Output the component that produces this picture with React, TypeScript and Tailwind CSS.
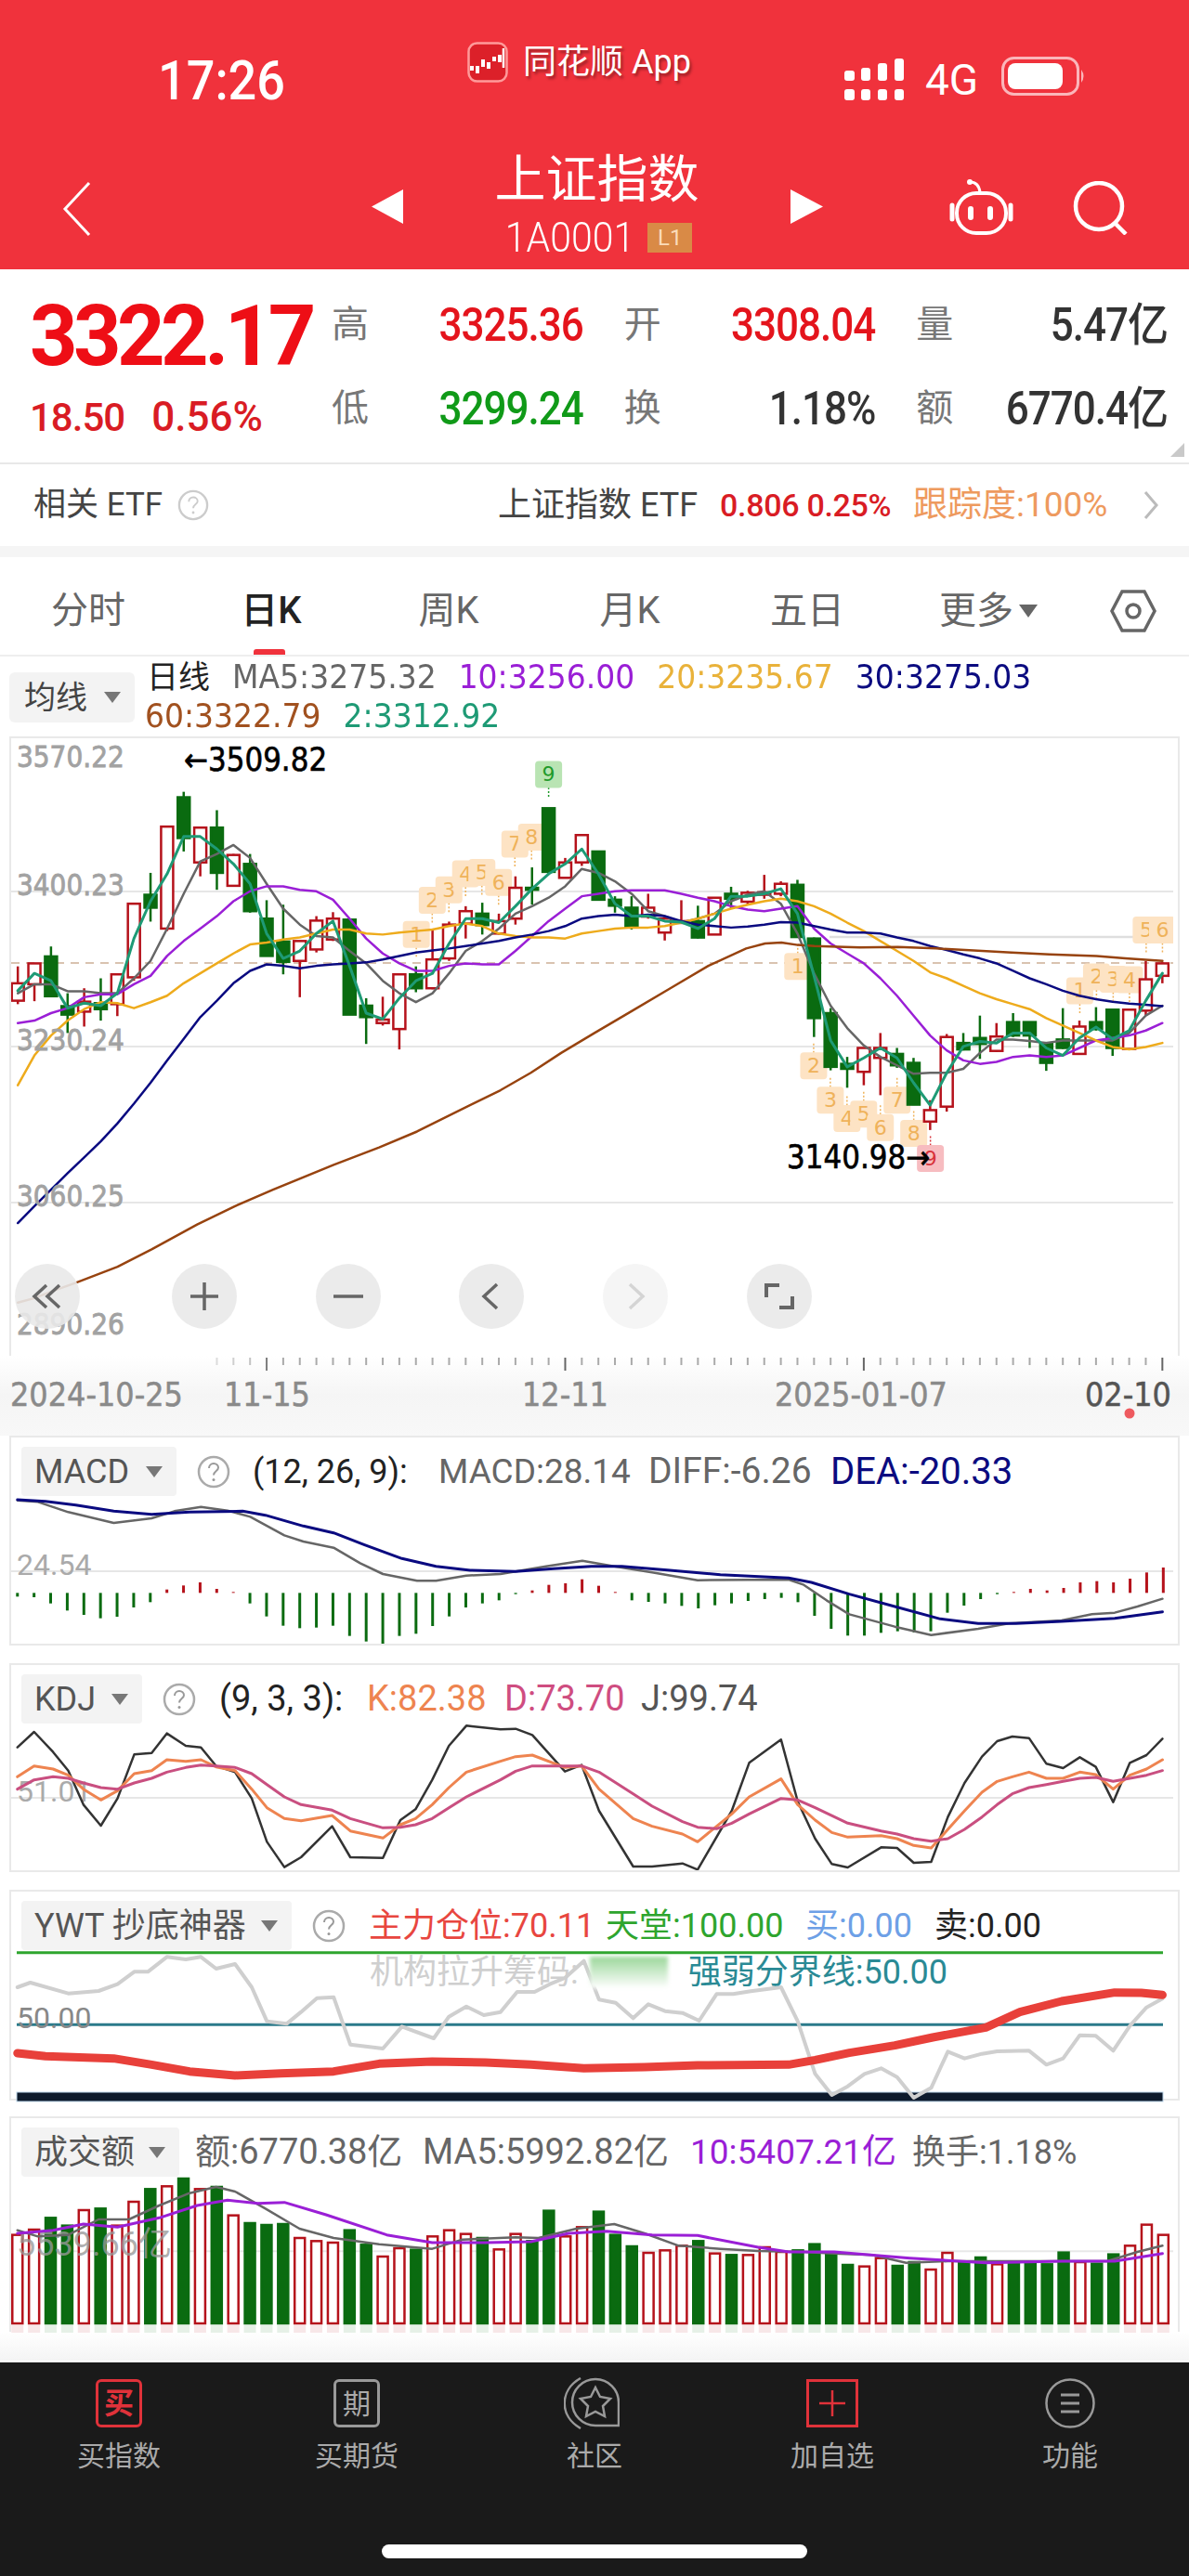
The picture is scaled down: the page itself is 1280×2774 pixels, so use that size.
import type { ReactNode } from 'react';

const CN = "[font-family:Roboto,'Noto_Sans_CJK_SC',sans-serif]";
const DJ = "[font-family:'DejaVu_Sans','Noto_Sans_CJK_SC',sans-serif]";

const RED = '#b5121b';
const GREEN = '#0a6b10';

// [up, high, top, bottom, low] read off the reference, in crop units (x 2.45, y 1.867)
const CANDLES: [number, number, number, number, number][] = [
  [1, 636, 670, 705, 712], [1, 630, 630, 672, 706], [0, 596, 616, 696, 696], [0, 690, 716, 733, 770],
  [1, 680, 707, 727, 757], [0, 660, 710, 722, 745], [1, 650, 652, 712, 736], [1, 510, 510, 658, 665],
  [0, 448, 492, 518, 546], [1, 355, 355, 560, 565], [0, 285, 296, 378, 405], [1, 357, 357, 427, 455],
  [0, 322, 357, 448, 482], [1, 410, 412, 474, 476], [0, 410, 430, 525, 528], [0, 503, 540, 615, 615],
  [0, 512, 586, 627, 652], [1, 585, 585, 625, 698], [1, 535, 544, 602, 608], [1, 527, 540, 582, 585],
  [0, 542, 542, 733, 733], [0, 700, 715, 738, 792], [1, 697, 743, 750, 755], [1, 652, 652, 762, 803],
  [0, 636, 652, 680, 688], [1, 560, 622, 680, 682], [1, 546, 552, 620, 625], [1, 515, 525, 550, 580],
  [0, 508, 530, 553, 572], [1, 530, 545, 570, 572], [1, 455, 478, 540, 552], [0, 437, 478, 482, 512],
  [0, 318, 318, 446, 452], [1, 418, 427, 458, 458], [1, 372, 372, 427, 434], [0, 405, 405, 502, 502],
  [0, 495, 502, 514, 528], [0, 495, 518, 556, 562], [1, 490, 518, 536, 540], [1, 535, 540, 568, 584],
  [1, 503, 545, 548, 550], [0, 514, 545, 578, 580], [1, 498, 498, 572, 572], [0, 476, 490, 500, 520],
  [1, 484, 488, 506, 512], [1, 452, 487, 492, 500], [1, 465, 470, 490, 495], [0, 462, 472, 577, 578],
  [0, 578, 580, 740, 778], [0, 720, 730, 838, 845], [0, 818, 832, 842, 880], [1, 800, 800, 848, 875],
  [1, 770, 800, 820, 895], [0, 800, 812, 835, 840], [0, 820, 830, 914, 915], [1, 905, 925, 948, 965],
  [1, 772, 778, 918, 928], [0, 770, 790, 803, 805], [0, 735, 780, 792, 822], [1, 750, 777, 806, 808],
  [0, 730, 748, 775, 778], [0, 748, 748, 775, 800], [0, 788, 790, 830, 846], [0, 720, 783, 800, 802],
  [1, 745, 757, 812, 813], [0, 718, 748, 762, 765], [0, 723, 723, 800, 816], [1, 722, 723, 802, 803],
  [1, 625, 662, 725, 735], [1, 628, 630, 655, 670],
];

const MA5 = [690, 672, 672, 686, 686, 690, 690, 660, 625, 560, 490, 425, 410, 392, 418, 470, 520, 552, 575, 578, 605, 630, 665, 690, 708, 690, 650, 605, 585, 560, 530, 515, 498, 475, 440, 448, 465, 490, 525, 535, 548, 540, 530, 505, 492, 485, 510, 570, 650, 715, 760, 795, 818, 835, 852, 850, 850, 842, 810, 783, 783, 786, 790, 785, 785, 785, 785, 770, 735, 715];
const MA10 = [750, 745, 730, 720, 698, 692, 692, 672, 655, 615, 585, 560, 535, 505, 485, 475, 475, 482, 485, 502, 540, 580, 610, 630, 645, 645, 635, 630, 632, 632, 605, 575, 545, 520, 495, 490, 485, 483, 483, 483, 490, 498, 505, 515, 522, 525, 520, 515, 560, 590, 610, 630, 660, 695, 735, 775, 805, 825, 832, 828, 818, 815, 818, 815, 800, 785, 780, 775, 765, 750];
const MA20 = [875, 815, 775, 745, 722, 708, 710, 720, 708, 695, 670, 650, 630, 610, 592, 588, 582, 578, 570, 562, 562, 570, 572, 568, 565, 562, 555, 550, 555, 570, 575, 578, 578, 580, 570, 565, 560, 558, 558, 555, 548, 540, 530, 520, 512, 505, 500, 505, 515, 530, 548, 565, 585, 605, 625, 648, 660, 675, 690, 702, 712, 722, 740, 755, 770, 785, 798, 803, 798, 790];
const MA30 = [1152, 1118, 1085, 1052, 1020, 988, 952, 912, 870, 825, 782, 738, 705, 670, 645, 632, 635, 640, 635, 632, 630, 628, 622, 615, 608, 604, 600, 595, 590, 585, 578, 572, 565, 555, 540, 535, 532, 535, 532, 535, 545, 552, 555, 558, 556, 552, 547, 548, 555, 562, 568, 568, 570, 578, 585, 595, 603, 612, 620, 630, 645, 660, 672, 685, 695, 702, 707, 711, 713, 716];
const MA2 = [685, 650, 665, 720, 710, 715, 690, 580, 505, 450, 375, 375, 400, 430, 470, 570, 620, 605, 570, 545, 635, 730, 742, 700, 665, 650, 590, 540, 540, 548, 515, 480, 450, 430, 400, 450, 510, 535, 535, 545, 547, 560, 540, 495, 495, 490, 480, 530, 655, 785, 838, 820, 800, 820, 870, 915, 850, 797, 787, 790, 770, 770, 800, 815, 780, 758, 782, 765, 705, 650];
const MA60 = [47, 1312, 91, 1303, 135, 1290, 200, 1272, 310, 1240, 400, 1205, 520, 1155, 620, 1118, 720, 1085, 880, 1035, 1000, 1000, 1100, 968, 1200, 930, 1320, 885, 1400, 850, 1480, 810, 1568, 770, 1668, 725, 1768, 680, 1868, 635, 1968, 600, 2018, 590, 2061, 588, 2104, 593, 2148, 595, 2268, 598, 2368, 597, 2468, 600, 2568, 604, 2668, 608, 2768, 612, 2892, 615, 2968, 620, 3066, 625];

// sequence badges, crop units; kind 0 orange, 1 green, 2 red; last flag: badge hangs under its candle
const BADGES: [number, number, string, number, boolean][] = [
  [1098, 572, '1', 0, false], [1140, 503, '2', 0, false], [1184, 482, '3', 0, false], [1228, 450, '4', 0, false], [1271, 447, '5', 0, false],
  [1315, 467, '6', 0, false], [1358, 390, '7', 0, false], [1402, 376, '8', 0, false], [1447, 250, '9', 1, false],
  [2104, 636, '1', 0, true], [2146, 836, '2', 0, true], [2190, 905, '3', 0, true], [2234, 942, '4', 0, true], [2278, 933, '5', 0, true],
  [2322, 960, '6', 0, true], [2366, 905, '7', 0, true], [2410, 972, '8', 0, true], [2454, 1022, '9', 2, true],
  [2848, 685, '1', 0, false], [2892, 657, '2', 0, false], [2936, 662, '3', 0, false], [2979, 663, '4', 0, false], [3023, 563, '5', 0, false], [3066, 563, '6', 0, false],
];

const DIFF = [23, 257, 50, 262, 90, 295, 150, 330, 200, 315, 230, 292, 265, 278, 300, 290, 330, 310, 375, 370, 400, 390, 440, 410, 475, 460, 505, 495, 550, 517, 575, 517, 615, 500, 660, 495, 720, 470, 768, 452, 810, 470, 860, 490, 920, 515, 1040, 513, 1060, 530, 1090, 580, 1120, 625, 1180, 665, 1228, 692, 1290, 672, 1330, 655, 1400, 645, 1440, 625, 1470, 620, 1500, 600, 1533, 575];
const DEA = [23, 255, 60, 260, 100, 272, 150, 292, 200, 302, 250, 295, 320, 292, 350, 305, 400, 340, 440, 362, 480, 400, 530, 445, 575, 470, 620, 483, 680, 487, 730, 478, 780, 470, 820, 470, 880, 482, 950, 497, 1040, 508, 1070, 522, 1120, 560, 1180, 600, 1240, 640, 1290, 655, 1340, 655, 1400, 648, 1470, 638, 1533, 617];
const MACD_BARS = [568, 570, 590, 613, 627, 638, 633, 603, 586, 545, 532, 522, 543, 553, 590, 632, 662, 670, 668, 662, 695, 713, 720, 695, 688, 663, 632, 603, 590, 580, 560, 548, 530, 525, 512, 533, 553, 580, 585, 590, 598, 606, 596, 590, 582, 576, 572, 586, 630, 672, 694, 694, 685, 680, 684, 680, 620, 597, 576, 560, 553, 543, 548, 540, 522, 518, 522, 510, 490, 474];

const KX = [23, 45, 70, 90, 110, 133, 155, 177, 200, 220, 245, 265, 285, 310, 332, 352, 375, 397, 438, 462, 505, 528, 548, 570, 592, 615, 660, 680, 702, 745, 767, 790, 835, 860, 900, 920, 965, 988, 1030, 1052, 1075, 1097, 1118, 1162, 1183, 1205, 1228, 1250, 1272, 1295, 1315, 1335, 1357, 1380, 1402, 1424, 1445, 1468, 1490, 1512, 1533];
const KJ = [1055, 1005, 1070, 1130, 1240, 1308, 1220, 1078, 1073, 1010, 1050, 1055, 1115, 1135, 1220, 1360, 1442, 1410, 1310, 1410, 1412, 1290, 1255, 1160, 1050, 985, 997, 995, 1015, 1133, 1112, 1260, 1440, 1440, 1430, 1450, 1260, 1105, 1030, 1230, 1350, 1432, 1443, 1378, 1380, 1428, 1425, 1280, 1170, 1085, 1035, 1020, 1025, 1108, 1122, 1087, 1118, 1232, 1105, 1080, 1027];
const KK = [1150, 1115, 1125, 1145, 1190, 1225, 1195, 1140, 1130, 1095, 1100, 1095, 1118, 1130, 1190, 1250, 1285, 1292, 1275, 1325, 1348, 1305, 1285, 1240, 1185, 1135, 1100, 1085, 1080, 1120, 1115, 1190, 1285, 1310, 1335, 1360, 1270, 1215, 1157, 1240, 1290, 1330, 1345, 1340, 1350, 1372, 1380, 1320, 1260, 1200, 1165, 1150, 1135, 1155, 1155, 1135, 1143, 1190, 1145, 1125, 1095];
const KD = [23, 1190, 45, 1160, 70, 1150, 90, 1155, 110, 1170, 133, 1185, 155, 1190, 177, 1170, 200, 1155, 220, 1135, 245, 1120, 265, 1112, 285, 1115, 310, 1120, 332, 1140, 352, 1175, 375, 1215, 397, 1240, 438, 1258, 462, 1285, 505, 1315, 528, 1313, 548, 1305, 570, 1285, 592, 1250, 615, 1215, 660, 1160, 680, 1132, 702, 1115, 745, 1115, 767, 1115, 790, 1135, 835, 1205, 860, 1245, 900, 1295, 920, 1313, 945, 1318, 965, 1300, 988, 1270, 1030, 1220, 1052, 1225, 1075, 1250, 1118, 1300, 1162, 1325, 1183, 1335, 1205, 1350, 1228, 1358, 1250, 1350, 1272, 1320, 1295, 1280, 1315, 1240, 1335, 1205, 1357, 1185, 1380, 1175, 1402, 1165, 1424, 1155, 1445, 1152, 1468, 1165, 1490, 1155, 1512, 1145, 1533, 1130];

const YWT_GRAY = [23, 360, 40, 345, 90, 380, 130, 372, 155, 350, 177, 310, 195, 310, 220, 262, 245, 270, 265, 262, 285, 300, 310, 285, 332, 360, 352, 470, 378, 478, 397, 440, 418, 395, 440, 392, 462, 545, 505, 558, 530, 487, 572, 525, 592, 455, 615, 422, 638, 450, 660, 440, 682, 375, 705, 375, 725, 350, 745, 330, 770, 275, 790, 400, 812, 410, 835, 460, 855, 415, 877, 437, 900, 443, 922, 468, 945, 382, 967, 382, 990, 373, 1030, 360, 1052, 470, 1075, 640, 1097, 708, 1118, 680, 1140, 640, 1162, 622, 1183, 650, 1205, 717, 1228, 685, 1250, 568, 1272, 590, 1295, 575, 1315, 567, 1357, 565, 1380, 610, 1402, 590, 1424, 515, 1445, 517, 1468, 565, 1490, 485, 1512, 425, 1533, 397];
const YWT_RED = [23, 573, 60, 583, 150, 590, 200, 610, 250, 632, 310, 645, 370, 638, 440, 632, 500, 607, 570, 600, 640, 603, 700, 610, 770, 622, 850, 618, 920, 612, 1040, 610, 1075, 595, 1120, 572, 1180, 548, 1230, 522, 1300, 490, 1345, 440, 1400, 405, 1470, 377, 1505, 378, 1533, 385];

const VOL: [number, number][] = [
  [1, 1160], [1, 1143], [0, 1105], [0, 1130], [1, 1080], [0, 1075], [1, 1130], [1, 1053], [0, 1012], [1, 1003],
  [0, 978], [1, 1012], [0, 1005], [1, 1097], [0, 1122], [0, 1128], [0, 1125], [1, 1170], [1, 1180], [1, 1185],
  [0, 1145], [0, 1192], [1, 1230], [1, 1203], [0, 1208], [1, 1165], [1, 1145], [1, 1157], [0, 1170], [1, 1207],
  [1, 1157], [0, 1180], [0, 1082], [1, 1165], [1, 1135], [0, 1085], [0, 1160], [0, 1197], [1, 1218], [1, 1210],
  [1, 1195], [0, 1180], [1, 1220], [0, 1225], [1, 1225], [1, 1200], [1, 1215], [0, 1210], [0, 1190], [0, 1222],
  [0, 1257], [1, 1262], [1, 1235], [0, 1260], [0, 1248], [1, 1272], [1, 1218], [0, 1250], [0, 1233], [1, 1255],
  [0, 1250], [0, 1250], [0, 1255], [0, 1217], [1, 1248], [0, 1253], [0, 1223], [1, 1195], [1, 1127], [1, 1160],
];
const VOL_GRAY = [23, 1145, 50, 1165, 90, 1160, 130, 1110, 170, 1110, 210, 1065, 250, 1025, 285, 1005, 310, 1020, 350, 1075, 395, 1140, 440, 1170, 500, 1190, 570, 1205, 610, 1175, 680, 1168, 710, 1170, 760, 1140, 810, 1125, 850, 1155, 895, 1195, 950, 1205, 1000, 1212, 1060, 1215, 1100, 1220, 1150, 1225, 1195, 1250, 1250, 1245, 1330, 1245, 1400, 1245, 1460, 1245, 1500, 1215, 1533, 1195];
const VOL_PURPLE = [23, 1155, 70, 1145, 110, 1125, 155, 1135, 210, 1105, 260, 1065, 300, 1048, 340, 1058, 375, 1055, 430, 1095, 510, 1160, 570, 1185, 640, 1185, 700, 1182, 750, 1155, 800, 1148, 860, 1160, 920, 1162, 1000, 1200, 1040, 1215, 1100, 1215, 1200, 1235, 1300, 1250, 1400, 1245, 1470, 1245, 1533, 1220];

const mainX = (i: number) => (47 + 43.75 * i) / 2.45;
const mainY = (v: number) => 700 + v / 1.867;
const seq = (ys: number[]) => ys.map((y, i) => `${mainX(i)},${mainY(y)}`).join(' ');
const pairs = (p: number[]) => {
  const out: string[] = [];
  for (let i = 0; i < p.length; i += 2) out.push(`${p[i] / 2.45},${mainY(p[i + 1])}`);
  return out.join(' ');
};
const sub = (p: number[], top: number) => {
  const out: string[] = [];
  for (let i = 0; i < p.length; i += 2) out.push(`${p[i] / 1.225},${top + p[i + 1] / 3}`);
  return out.join(' ');
};
const zip = (xs: number[], ys: number[]) => xs.flatMap((x, i) => [x, ys[i]]);
const barX = (i: number) => (23 + 21.9 * i) / 1.225;

function Line({ points, color, width = 2.5 }: { points: string; color: string; width?: number }) {
  return <polyline points={points} fill="none" stroke={color} strokeWidth={width} strokeLinejoin="round" strokeLinecap="round" />;
}

function Caret() {
  return (
    <svg width="18" height="14" viewBox="0 0 18 14" className="shrink-0">
      <path d="M0 1h18L9 13z" fill="#777" />
    </svg>
  );
}

function Help() {
  return (
    <svg width="36" height="36" viewBox="0 0 36 36" className="shrink-0">
      <circle cx="18" cy="18" r="16" fill="none" stroke="#aaa" strokeWidth="2.5" />
      <path d="M13 14c0-3 2.300-5 5-5s5 2 5 4.500c0 3.500-5 3.500-5 8" fill="none" stroke="#999" strokeWidth="2" />
      <circle cx="18" cy="26.500" r="1.500" fill="#999" />
    </svg>
  );
}

function Panel({ className, children }: { className: string; children: ReactNode }) {
  return <div className={`relative mx-[10px] shrink-0 border-2 border-[#e9e9e9] ${className}`}>{children}</div>;
}

function PanelHead({ name, pillW, children }: { name: string; pillW: string; children: ReactNode }) {
  return (
    <div className="flex h-[63px] items-end pl-[11px]">
      <div className={`flex h-[53px] ${pillW} shrink-0 items-center justify-between rounded-[4px] bg-[#f3f3f3] pl-[14px] pr-[15px] text-[36px] text-[#555]`}>
        <span className="whitespace-nowrap">{name}</span>
        <Caret />
      </div>
      <div className="flex h-[53px] items-center whitespace-nowrap text-[38px]">{children}</div>
    </div>
  );
}

function RoundBtn({ children, className = '' }: { children: ReactNode; className?: string }) {
  return (
    <div className={`flex h-[70px] w-[70px] items-center justify-center rounded-full bg-[#e9e9e9]/90 ${className}`}>
      <svg width="40" height="40" viewBox="0 0 40 40" fill="none" stroke="#666" strokeWidth="3.500">
        {children}
      </svg>
    </div>
  );
}

function QuoteCell({ label, value, color }: { label: string; value: string; color: string }) {
  return (
    <div className="flex items-center justify-between">
      <span className="text-[40px] leading-none text-[#777]">{label}</span>
      <span className={`inline-block origin-center scale-y-[1.12] text-[44px] leading-none tracking-[-1px] font-medium ${color}`}>{value}</span>
    </div>
  );
}

// svg text stretched a little taller, the way the chart labels are in the picture
function ChartLabel({ x, y, size, fill, weight = 0.6, children }: { x: number; y: number; size: number; fill: string; weight?: number; children: ReactNode }) {
  return (
    <text transform={`translate(${x} ${y}) scale(1 1.12)`} dominantBaseline="central" fontSize={size} fill={fill} stroke={fill} strokeWidth={weight} className={DJ}>
      {children}
    </text>
  );
}

function MainChart() {
  const badgeBg = ['#fde3c4', '#b9e4b3', '#f7bcc0'];
  const badgeFg = ['#efb25a', '#1f9a2a', '#d8323a'];
  return (
    <svg width="1251" height="663" viewBox="12 795 1251 663" className="block overflow-hidden">
      {[960, 1127, 1295].map((y) => (
        <line key={y} x1="12" x2="1263" y1={y} y2={y} stroke="#e6e6e6" strokeWidth="2" />
      ))}
      <line x1="893" x2="1263" y1="1009" y2="1009" stroke="#dedede" strokeWidth="2.500" />
      <line x1="12" x2="1263" y1="1037" y2="1037" stroke="#cdb096" strokeWidth="1.500" strokeDasharray="9 7" />
      {BADGES.map(([x, y, n, kind, under], i) => (
        <g key={i}>
          <line
            x1={x / 2.45}
            x2={x / 2.45}
            y1={mainY(y) + (under ? -14 : 14)}
            y2={mainY(y) + (under ? -26 : 26)}
            stroke={badgeFg[kind]}
            strokeWidth="1.500"
            strokeDasharray="2 2"
          />
          <rect x={x / 2.45 - 14.500} y={mainY(y) - 14.500} width="29" height="29" rx="4" fill={badgeBg[kind]} />
          <text x={x / 2.45} y={mainY(y)} textAnchor="middle" dominantBaseline="central" fontSize="22" fill={badgeFg[kind]} className={DJ}>
            {n}
          </text>
        </g>
      ))}
      {CANDLES.map(([up, hi, top, bot, lo], i) => {
        const c = up ? RED : GREEN;
        const x = mainX(i);
        return (
          <g key={i}>
            <line x1={x} x2={x} y1={mainY(hi)} y2={mainY(lo)} stroke={c} strokeWidth="2.500" />
            <rect
              x={x - 6.500}
              y={mainY(top)}
              width="13"
              height={Math.max(mainY(bot) - mainY(top), 2)}
              fill={up ? '#fff' : c}
              stroke={c}
              strokeWidth="2.500"
            />
          </g>
        );
      })}
      <Line points={seq(MA5)} color="#666" />
      <Line points={seq(MA10)} color="#9a1fd6" />
      <Line points={seq(MA20)} color="#eeab1c" />
      <Line points={seq(MA30)} color="#0a0a80" />
      <Line points={pairs(MA60)} color="#97430f" />
      <Line points={seq(MA2)} color="#1e9a75" width={3} />
      {(
        [
          ['3570.22', 815],
          ['3400.23', 953],
          ['3230.24', 1120],
          ['3060.25', 1288],
          ['2890.26', 1426],
        ] as [string, number][]
      ).map(([t, y]) => (
        <ChartLabel key={t} x={18} y={y} size={28} fill="#a2a2a2" weight={0.8}>
          {t}
        </ChartLabel>
      ))}
      <ChartLabel x={198} y={818} size={31} fill="#000">
        ←3509.82
      </ChartLabel>
      <ChartLabel x={847} y={1246} size={31} fill="#000">
        3140.98→
      </ChartLabel>
    </svg>
  );
}

function DateAxis() {
  const dates: [string, number, string][] = [
    ['2024-10-25', 11, '#8a8a8a'],
    ['11-15', 241, '#8a8a8a'],
    ['12-11', 562, '#8a8a8a'],
    ['2025-01-07', 834, '#8a8a8a'],
    ['02-10', 1168, '#555'],
  ];
  const big = [15, 33, 51, 69];
  return (
    <svg width="1280" height="86" viewBox="0 1460 1280 86" className="block">
      {Array.from({ length: 58 }, (_, i) => i + 12).map((i) => {
        const x = mainX(i);
        return (
          <line
            key={i}
            x1={x}
            x2={x}
            y1="1462"
            y2={big.includes(i) ? 1476 : 1470}
            stroke={big.includes(i) ? '#666' : '#aaa'}
            strokeOpacity={i < 16 ? 0.4 + (i - 12) * 0.15 : 1}
            strokeWidth="2"
          />
        );
      })}
      {dates.map(([t, x, c]) => (
        <ChartLabel key={t} x={x} y={1501} size={32} fill={c} weight={0.5}>
          {t}
        </ChartLabel>
      ))}
      <circle cx="1216" cy="1522" r="5.500" fill="#ee5a5f" />
    </svg>
  );
}

function MacdChart() {
  const T = 1530;
  return (
    <svg width="1251" height="159" viewBox="12 1611 1251 159" className="block">
      <line x1="12" x2="1263" y1={T + 486 / 3} y2={T + 486 / 3} stroke="#e6e6e6" strokeWidth="2" />
      {MACD_BARS.map((v, i) => {
        const zero = T + 556 / 3;
        const y = T + v / 3;
        return <line key={i} x1={barX(i)} x2={barX(i)} y1={zero} y2={y} stroke={v < 556 ? RED : GREEN} strokeWidth="3" />;
      })}
      <Line points={sub(DIFF, T)} color="#666" />
      <Line points={sub(DEA, T)} color="#0a0a80" width={3} />
      <text x="18" y={T + 464 / 3} dominantBaseline="central" fontSize="32" fill="#aaa" className={CN}>
        24.54
      </text>
    </svg>
  );
}

function KdjChart() {
  const T = 1530;
  return (
    <svg width="1251" height="158" viewBox="12 1856 1251 158" className="block">
      <line x1="12" x2="1263" y1={T + 1218 / 3} y2={T + 1218 / 3} stroke="#e6e6e6" strokeWidth="2" />
      <text x="18" y={T + 1198 / 3} dominantBaseline="central" fontSize="32" fill="#aaa" className={CN}>
        51.01
      </text>
      <Line points={sub(zip(KX, KJ), T)} color="#333" />
      <Line points={sub(zip(KX, KK), T)} color="#ee8450" width={3} />
      <Line points={sub(KD, T)} color="#c94f80" width={3} />
    </svg>
  );
}

function YwtChart() {
  const T = 2020;
  const y = (v: number) => T + v / 3;
  return (
    <svg width="1251" height="163" viewBox="12 2100 1251 163" className="block overflow-visible">
      <line x1="18" x2="1252" y1={y(248)} y2={y(248)} stroke="#2ea52e" strokeWidth="3" />
      <line x1="18" x2="1252" y1={y(481)} y2={y(481)} stroke="#2b7a8a" strokeWidth="3" />
      <rect x="18" y="2253" width="1234" height="10" fill="#0e1a2c" stroke="#bcd6ea" strokeWidth="1" />
      <text x="18" y={y(458)} dominantBaseline="central" fontSize="32" fill="#888" className={CN}>
        50.00
      </text>
      <Line points={sub(YWT_GRAY, T)} color="#cfcfcf" width={4} />
      <Line points={sub(YWT_RED, T)} color="#e8403a" width={9} />
    </svg>
  );
}

function VolChart() {
  const T = 2020;
  const y = (v: number) => T + v / 3;
  const base = 2502;
  return (
    <svg width="1251" height="167" viewBox="12 2344 1251 167" className="block overflow-visible">
      <line x1="12" x2="1263" y1={y(1213)} y2={y(1213)} stroke="#e8e8e8" strokeWidth="2" />
      {VOL.map(([up, top], i) => {
        const c = up ? RED : GREEN;
        return (
          <g key={i}>
            <rect x={barX(i) - 5.500} y={y(top)} width="11" height={base - y(top)} fill={up ? '#fff' : c} stroke={c} strokeWidth="2.500" />
            <rect x={barX(i) - 6.500} y={base + 2} width="13" height="8" fill={c} opacity="0.1" />
          </g>
        );
      })}
      <text x="18" y={y(1192)} dominantBaseline="central" fontSize="36" fill="#999" fillOpacity="0.8" className={CN}>
        5539.66亿
      </text>
      <Line points={sub(VOL_GRAY, T)} color="#666" />
      <Line points={sub(VOL_PURPLE, T)} color="#9a1fd6" width={3} />
    </svg>
  );
}

export default function App() {
  const tabs = ['分时', '日K', '周K', '月K', '五日'];
  return (
    <div className={`flex h-[2774px] w-[1280px] flex-col overflow-hidden bg-white ${CN}`}>
      {/* red header */}
      <header className="h-[290px] shrink-0 bg-[#f0323c] text-white">
        <div className="flex h-[112px] pt-[40px]">
          <div className="flex w-[503px] items-center pl-[170px] pt-[20px] text-[54px] font-medium">
            <span className="inline-block scale-y-[1.1]">17:26</span>
          </div>
          <div className="flex w-[406px] gap-[16px] pt-[5px]">
            <svg width="44" height="44" viewBox="0 0 44 44" className="shrink-0">
              <rect x="1.500" y="1.500" width="41" height="41" rx="9" fill="#dc2029" stroke="#ff9a9a" strokeWidth="2.500" />
              <g fill="#fff">
                <rect x="3" y="26" width="4" height="5" />
                <rect x="9" y="26" width="4" height="8" />
                <rect x="15" y="19" width="4" height="8" />
                <rect x="21" y="22" width="4" height="7" />
                <rect x="27" y="16" width="4" height="5" />
                <rect x="33" y="14" width="4" height="8" />
              </g>
              <path d="M39 7v21" stroke="#fff" strokeWidth="2.500" />
            </svg>
            <span className="text-[36px] leading-[44px] whitespace-nowrap [text-shadow:2px_3px_3px_rgba(0,0,0,0.35)]">同花顺 App</span>
          </div>
          <div className="flex items-start gap-[23px] pt-[23px]">
            <svg width="64" height="45" viewBox="0 0 64 45" fill="#fff" className="shrink-0">
              <rect x="0" y="13" width="11" height="11" rx="3" />
              <rect x="0" y="33" width="11" height="12" rx="3" />
              <rect x="18" y="10" width="10" height="14" rx="3" />
              <rect x="18" y="33" width="10" height="12" rx="3" />
              <rect x="36" y="5" width="10" height="19" rx="3" />
              <rect x="36" y="33" width="10" height="12" rx="3" />
              <rect x="54" y="0" width="10" height="24" rx="3" />
              <rect x="54" y="33" width="10" height="12" rx="3" />
            </svg>
            <span className="-mt-[2px] text-[46px] leading-[50px]">4G</span>
            <svg width="92" height="42" viewBox="0 0 92 42" fill="none" className="mt-[-2px] ml-[2px] shrink-0">
              <rect x="1.500" y="1.500" width="81" height="39" rx="12" stroke="#fbb6ba" strokeWidth="3" />
              <rect x="7" y="7" width="59" height="28" rx="8" fill="#fff" />
              <path d="M86 14q5 7 0 14z" fill="#fbb6ba" />
            </svg>
          </div>
        </div>
        <div className="flex h-[178px] items-start pl-[67px]">
          <svg width="31" height="60" viewBox="0 0 31 60" fill="none" className="mt-[83px] shrink-0">
            <path d="M29 2L3 30l26 28" stroke="#fff" strokeWidth="3" />
          </svg>
          <svg width="34" height="37" viewBox="0 0 34 37" className="ml-[302px] mt-[92px] shrink-0">
            <path d="M34 0v37L0 18.500z" fill="#fff" />
          </svg>
          <div className="flex w-[417px] shrink-0 flex-col items-center pt-[50px]">
            <div className="text-[55px] leading-[62px]">上证指数</div>
            <div className="mt-[16px] flex items-center gap-[14px] pl-[4px]">
              <span className="inline-block scale-y-[1.1] text-[41px] leading-[32px] font-light">1A0001</span>
              <span className="flex h-[32px] w-[48px] items-center justify-center bg-[#d98a46] text-[24px] text-[#fbdcb9]">L1</span>
            </div>
          </div>
          <svg width="35" height="37" viewBox="0 0 35 37" className="mt-[92px] shrink-0">
            <path d="M0 0v37L35 18.500z" fill="#fff" />
          </svg>
          <svg width="69" height="60" viewBox="0 0 69 60" fill="none" stroke="#fff" strokeWidth="4" className="ml-[136px] mt-[81px] shrink-0">
            <rect x="8" y="15" width="53" height="43" rx="21" />
            <path d="M22 3c6 0 10 3 11 11" strokeWidth="3" />
            <circle cx="22" cy="3" r="3" fill="#fff" stroke="none" />
            <path d="M23 32v9M44 32v9" strokeWidth="6" strokeLinecap="round" />
            <path d="M3 28v15M66 28v15" strokeWidth="5" strokeLinecap="round" />
          </svg>
          <svg width="60" height="58" viewBox="0 0 60 58" fill="none" stroke="#fff" strokeWidth="4.500" className="ml-[64px] mt-[83px] shrink-0">
            <circle cx="28" cy="27" r="25" />
            <path d="M46 46l11 11" strokeWidth="4.500" />
          </svg>
        </div>
      </header>

      {/* quote */}
      <section className="relative flex h-[210px] shrink-0 border-b-2 border-[#e8e8e8] pt-[28px]">
        <div className="w-[357px] shrink-0 pl-[32px]">
          <div className="text-[90px] leading-[90px] font-bold tracking-[-4.600px] text-[#ee0e16]">3322.17</div>
          <div className="mt-[18px] flex items-baseline gap-[29px] leading-[46px] font-medium text-[#d91c24]">
            <span className="text-[42px] tracking-[-1px]">18.50</span>
            <span className="text-[44px]">0.56%</span>
          </div>
        </div>
        <div className="mt-[10px] grid h-[134px] w-[900px] grid-cols-3 grid-rows-2 gap-x-[44px] gap-y-[46px]">
          <QuoteCell label="高" value="3325.36" color="text-[#e4141c]" />
          <QuoteCell label="开" value="3308.04" color="text-[#e4141c]" />
          <QuoteCell label="量" value="5.47亿" color="text-[#333]" />
          <QuoteCell label="低" value="3299.24" color="text-[#109a18]" />
          <QuoteCell label="换" value="1.18%" color="text-[#333]" />
          <QuoteCell label="额" value="6770.4亿" color="text-[#333]" />
        </div>
        <svg width="15" height="15" viewBox="0 0 15 15" className="absolute bottom-[6px] right-[5px]">
          <path d="M15 0v15H0z" fill="#c9c9c9" />
        </svg>
      </section>

      {/* etf row */}
      <section className="flex h-[88px] shrink-0 items-center pl-[36px] text-[#444]">
        <span className="w-[155px] text-[35px]">相关 ETF</span>
        <svg width="34" height="34" viewBox="0 0 36 36" className="shrink-0">
          <circle cx="18" cy="18" r="16" fill="none" stroke="#ccc" strokeWidth="2.500" />
          <path d="M13 14c0-3 2.300-5 5-5s5 2 5 4.500c0 3.500-5 3.500-5 8" fill="none" stroke="#ccc" strokeWidth="2" />
          <circle cx="18" cy="26.500" r="1.500" fill="#ccc" />
        </svg>
        <span className="ml-[311px] w-[239px] text-[36px] whitespace-nowrap">上证指数 ETF</span>
        <span className="w-[208px] text-[34px] tracking-[-0.300px] font-medium whitespace-nowrap text-[#d91c24]">0.806 0.25%</span>
        <span className="w-[247px] text-[37px] whitespace-nowrap text-[#ee9a5e]">跟踪度:100%</span>
        <svg width="18" height="32" viewBox="0 0 18 32" fill="none" className="shrink-0">
          <path d="M3 2l12 14L3 30" stroke="#bbb" strokeWidth="3" />
        </svg>
      </section>
      <div className="h-[12px] shrink-0 bg-[#f5f5f5]" />

      {/* period tabs */}
      <nav className="grid h-[107px] shrink-0 grid-cols-[190px_204px_178px_212px_170px_220px_92px] border-b-2 border-[#eee] text-[40px] text-[#666]">
        {tabs.map((t, i) => (
          <div key={t} className={`relative flex items-center justify-center pt-[11px] ${i === 1 ? 'font-medium text-[#222]' : ''}`}>
            {t}
            {i === 1 && <span className="absolute bottom-0 left-[83px] h-[6px] w-[34px] rounded-t-[3px] bg-[#f0323c]" />}
          </div>
        ))}
        <div className="flex items-center justify-center gap-[6px] pt-[11px]">
          更多
          <svg width="20" height="14" viewBox="0 0 20 14">
            <path d="M0 0h20L10 14z" fill="#666" />
          </svg>
        </div>
        <div className="flex items-center justify-center pt-[11px]">
          <svg width="50" height="46" viewBox="0 0 50 46" fill="none" stroke="#666" strokeWidth="3.500">
            <path d="M13 2h24l11 21-11 21H13L2 23z" />
            <circle cx="25" cy="23" r="7" />
          </svg>
        </div>
      </nav>

      {/* ma legend */}
      <section className={`flex h-[86px] shrink-0 pl-[10px] text-[33px] leading-[42px] ${DJ}`}>
        <div className="mr-[13px] mt-[17px] flex h-[54px] w-[135px] shrink-0 items-center justify-between rounded-[6px] bg-[#f3f3f3] pl-[16px] pr-[15px] text-[34px] text-[#444]">
          <span className={CN}>均线</span>
          <Caret />
        </div>
        <div className="flex flex-col whitespace-nowrap">
          <div className="flex gap-[24px] pt-[1px]">
            <span className={`text-[#222] ${CN} text-[34px]`}>日线</span>
            <span className="inline-block scale-y-[1.1] text-[#666]">MA5:3275.32</span>
            <span className="inline-block scale-y-[1.1] text-[#9a1fd6]">10:3256.00</span>
            <span className="inline-block scale-y-[1.1] text-[#e9b23a]">20:3235.67</span>
            <span className="inline-block scale-y-[1.1] text-[#0b0b80]">30:3275.03</span>
          </div>
          <div className="flex gap-[24px]">
            <span className="-ml-[2px] inline-block scale-y-[1.1] text-[#a1511f]">60:3322.79</span>
            <span className="inline-block scale-y-[1.1] text-[#1e9a75]">2:3312.92</span>
          </div>
        </div>
      </section>

      {/* main chart */}
      <section className="relative mx-[10px] h-[667px] shrink-0 border-2 border-b-0 border-[#e9e9e9]">
        <MainChart />
        <div className="absolute left-[4px] top-[566px] flex">
          <RoundBtn>
            <path d="M19 8L6 20l13 12M33 8L20 20l13 12" />
          </RoundBtn>
          <RoundBtn className="ml-[99px]">
            <path d="M20 5v30M5 20h30" />
          </RoundBtn>
          <RoundBtn className="ml-[85px]">
            <path d="M4 20h32" />
          </RoundBtn>
          <RoundBtn className="ml-[84px]">
            <path d="M26 7L12 20l14 13" />
          </RoundBtn>
          <RoundBtn className="ml-[85px] opacity-50">
            <path d="M14 7l14 13-14 13" stroke="#aaa" />
          </RoundBtn>
          <RoundBtn className="ml-[85px]">
            <path d="M20 8H6v13M20 32h14V20" strokeWidth="4" />
          </RoundBtn>
        </div>
      </section>
      <div className="h-[86px] shrink-0 bg-gradient-to-b from-white via-[#f5f5f5] to-[#f8f8f8]">
        <DateAxis />
      </div>

      {/* sub charts */}
      <Panel className="h-[226px]">
        <PanelHead name="MACD" pillW="w-[167px]">
          <span className="ml-[22px]">
            <Help />
          </span>
          <span className="ml-[24px] w-[200px] text-[36px] text-[#222]">(12, 26, 9):</span>
          <span className="w-[226px] text-[37px] text-[#666]">MACD:28.14</span>
          <span className="w-[196px] text-[39px] text-[#666]">DIFF:-6.26</span>
          <span className="text-[40px] text-[#0b0b80]">DEA:-20.33</span>
        </PanelHead>
        <MacdChart />
      </Panel>

      <Panel className="mt-[19px] h-[225px]">
        <PanelHead name="KDJ" pillW="w-[130px]">
          <span className="ml-[22px]">
            <Help />
          </span>
          <span className="ml-[25px] w-[159px] text-[#222]">(9, 3, 3):</span>
          <span className="w-[148px] text-[#ee8450]">K:82.38</span>
          <span className="w-[147px] text-[#cf4d80]">D:73.70</span>
          <span className="text-[#555]">J:99.74</span>
        </PanelHead>
        <KdjChart />
      </Panel>

      <Panel className="mt-[19px] h-[227px]">
        <PanelHead name="YWT 抄底神器" pillW="w-[291px]">
          <span className="ml-[22px]">
            <Help />
          </span>
          <span className="ml-[25px] w-[255px] text-[36px] text-[#e8463f]">主力仓位:70.11</span>
          <span className="w-[215px] text-[36px] text-[#2ea52e]">天堂:100.00</span>
          <span className="w-[139px] text-[36px] text-[#6da0e6]">买:0.00</span>
          <span className="text-[36px] text-[#222]">卖:0.00</span>
        </PanelHead>
        <YwtChart />
        <div className="absolute left-[386px] top-[67px] flex h-[40px] items-center text-[36px] whitespace-nowrap">
          <span className="text-[#cfcfcf]">机构拉升筹码:</span>
          <span className="mx-[12px] h-[34px] w-[84px] bg-gradient-to-b from-[#9ad69a] to-white blur-[2px]" />
          <span className="ml-[10px] text-[#2a8a95]">强弱分界线:50.00</span>
        </div>
      </Panel>

      <div className="relative mx-[10px] mt-[17px] h-[232px] shrink-0 border-x-2 border-t-2 border-[#e9e9e9]">
        <PanelHead name="成交额" pillW="w-[170px]">
          <span className="ml-[17px] w-[245px] text-[#666]">额:6770.38亿</span>
          <span className="w-[288px] text-[#666]">MA5:5992.82亿</span>
          <span className="w-[239px] text-[37px] text-[#9a1fd6]">10:5407.21亿</span>
          <span className="text-[36px] text-[#666]">换手:1.18%</span>
        </PanelHead>
        <VolChart />
      </div>
      <div className="h-[31px] shrink-0 bg-gradient-to-b from-white to-[#f4f4f4]" />

      {/* bottom bar */}
      <footer className="flex h-[232px] shrink-0 flex-col border-t-2 border-white bg-[#1a1a1a] text-[30px] text-[#aaa]">
        <div className="grid grid-cols-5 pt-[14px]">
          {[
            {
              label: '买指数',
              icon: <span className="flex h-[52px] w-[50px] items-center justify-center rounded-[6px] border-[3px] border-[#e0323a] text-[32px] font-bold text-[#e0323a]">买</span>,
            },
            {
              label: '买期货',
              icon: <span className="flex h-[52px] w-[50px] items-center justify-center rounded-[6px] border-[3px] border-[#999] text-[30px] text-[#aaa]">期</span>,
            },
            {
              label: '社区',
              icon: (
                <svg width="60" height="56" viewBox="0 0 60 56" fill="none" stroke="#999" strokeWidth="2.500" className="-ml-[6px]">
                  <path d="M18 1C-5 14-5 42 18 55" />
                  <path d="M59 51V27a25 25 0 1 0-25 25h25z" />
                  <path d="M34 11l5 10 11 2-8 8 2 11-10-5-10 5 2-11-8-8 11-2z" strokeWidth="2.500" />
                </svg>
              ),
            },
            {
              label: '加自选',
              icon: (
                <span className="flex h-[52px] w-[56px] items-center justify-center border-[3px] border-[#e0323a]">
                  <svg width="28" height="28" viewBox="0 0 28 28" stroke="#e0323a" strokeWidth="2.500">
                    <path d="M14 0v28M0 14h28" />
                  </svg>
                </span>
              ),
            },
            {
              label: '功能',
              icon: (
                <svg width="54" height="54" viewBox="0 0 54 54" fill="none" stroke="#999" strokeWidth="2.500">
                  <circle cx="27" cy="27" r="25.500" />
                  <path d="M17 18h20M17 27h20M17 36h20" strokeWidth="3" />
                </svg>
              ),
            },
          ].map((item) => (
            <div key={item.label} className="flex flex-col items-center">
              <div className="flex h-[60px] items-center justify-center">{item.icon}</div>
              <span className="mt-[8px] leading-[38px]">{item.label}</span>
            </div>
          ))}
        </div>
        <div className="mx-auto mt-[76px] h-[15px] w-[458px] rounded-full bg-white" />
      </footer>
    </div>
  );
}
